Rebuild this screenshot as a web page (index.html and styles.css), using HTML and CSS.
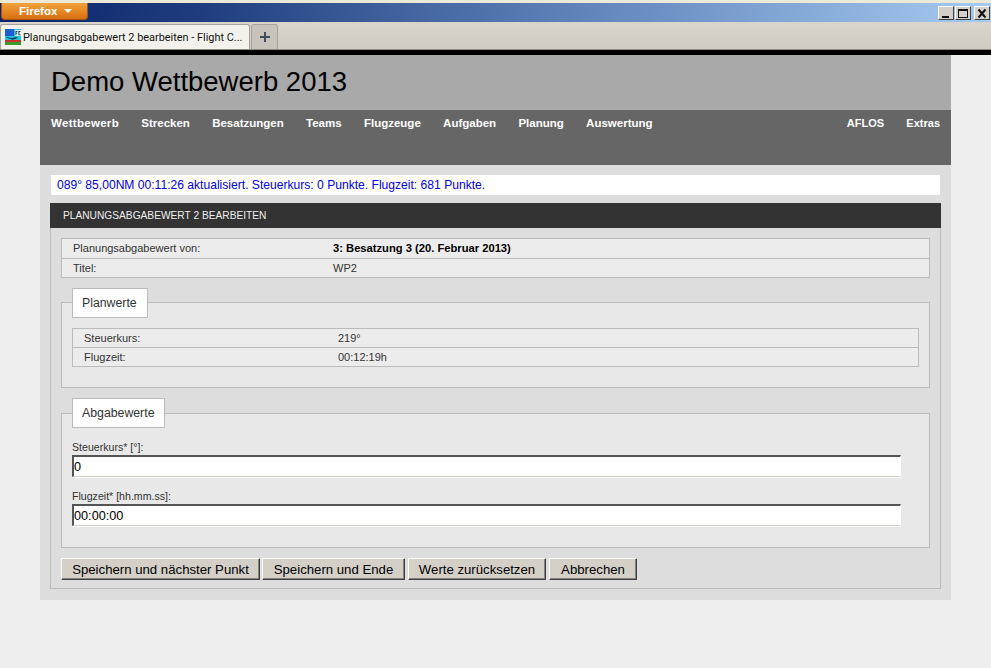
FILE: index.html
```html
<!DOCTYPE html>
<html lang="de">
<head>
    <meta charset="UTF-8">
    <meta name="viewport" content="width=device-width, initial-scale=1.0">
    <title>Planungsabgabewert 2 bearbeiten - Flight Contest</title>
    <link rel="stylesheet" href="styles.css">
</head>
<body>
    <div class="browser">
        <div class="titlebar">
            <div class="ff-button">Firefox <span class="ff-arrow"></span></div>
            <div class="win-buttons">
                <div class="win-btn">
                    <svg width="16" height="14" viewBox="0 0 16 14"><rect x="4" y="10" width="7" height="2" fill="#111"/></svg>
                </div>
                <div class="win-btn">
                    <svg width="16" height="14" viewBox="0 0 16 14"><rect x="3.500" y="3.500" width="9" height="8" fill="none" stroke="#111"/><rect x="3" y="3" width="10" height="2" fill="#111"/></svg>
                </div>
                <div class="win-btn win-close">
                    <svg width="16" height="14" viewBox="0 0 16 14"><path d="M4.500 3.500l7 8M11.500 3.500l-7 8" stroke="#111" stroke-width="2"/></svg>
                </div>
            </div>
        </div>
        <div class="tabstrip">
            <div class="tab">
                <svg class="favicon" width="16" height="16" viewBox="0 0 16 16">
                    <rect width="16" height="16" fill="#1cc6e0"/>
                    <rect y="0" width="9" height="7" fill="#1a5fd0"/>
                    <rect y="13" width="16" height="3" fill="#3a9a2a"/>
                    <rect y="11" width="16" height="2" fill="#c8342c"/>
                    <path d="M1 8l6 1 4-1 2 1-3 1-3 1-1-1-4-1z" fill="#123a60"/>
                    <rect x="10" y="1" width="6" height="6" fill="#d8f4f0"/>
                    <path d="M10.500 2h2v.8h-1.200v1h1v.8h-1v1.700h-.8zM15.500 2.800h-1.200v2.600h1.200v.8h-2v-4.200h2z" fill="#0a1a50"/>
                </svg>
                <span class="tab-title">Planungsabgabewert 2 bearbeiten - Flight C...</span>
            </div>
            <div class="newtab">
                <svg width="12" height="12" viewBox="0 0 12 12"><path d="M6 1v10M1 6h10" stroke="#3f4d5f" stroke-width="2"/></svg>
            </div>
        </div>
    </div>

    <div class="page">
        <div class="header">
            <h1>Demo Wettbewerb 2013</h1>
        </div>
        <div class="nav">
            <ul class="nav-left">
                <li>Wettbewerb</li>
                <li>Strecken</li>
                <li>Besatzungen</li>
                <li>Teams</li>
                <li>Flugzeuge</li>
                <li>Aufgaben</li>
                <li>Planung</li>
                <li>Auswertung</li>
            </ul>
            <ul class="nav-right">
                <li>AFLOS</li>
                <li>Extras</li>
            </ul>
        </div>
        <div class="content">
            <div class="message">089° 85,00NM 00:11:26 aktualisiert. Steuerkurs: 0 Punkte. Flugzeit: 681 Punkte.</div>

            <div class="box">
                <h2 class="box-title">PLANUNGSABGABEWERT 2 BEARBEITEN</h2>
                <div class="box-body">
                    <table class="info">
                        <tr>
                            <td class="info-label">Planungsabgabewert von:</td>
                            <td><strong>3: Besatzung 3 (20. Februar 2013)</strong></td>
                        </tr>
                        <tr>
                            <td class="info-label">Titel:</td>
                            <td>WP2</td>
                        </tr>
                    </table>

                    <div class="set set-plan">
                        <div class="legend">Planwerte</div>
                        <table class="info info-inner">
                            <tr>
                                <td class="info-label">Steuerkurs:</td>
                                <td>219°</td>
                            </tr>
                            <tr>
                                <td class="info-label">Flugzeit:</td>
                                <td>00:12:19h</td>
                            </tr>
                        </table>
                    </div>

                    <div class="set set-input">
                        <div class="legend">Abgabewerte</div>
                        <label class="field-label" for="kurs">Steuerkurs* [°]:</label>
                        <input class="field" type="text" id="kurs" value="0">
                        <label class="field-label" for="zeit">Flugzeit* [hh.mm.ss]:</label>
                        <input class="field" type="text" id="zeit" value="00:00:00">
                    </div>

                    <div class="buttons">
                        <button type="button" class="btn-next">Speichern und nächster Punkt</button>
                        <button type="button" class="btn-end">Speichern und Ende</button>
                        <button type="button" class="btn-reset">Werte zurücksetzen</button>
                        <button type="button" class="btn-last">Abbrechen</button>
                    </div>
                </div>
            </div>
        </div>
    </div>
</body>
</html>
```

FILE: styles.css
```css
body {
    font-family: "Liberation Sans", Arial, sans-serif;
    background-color: #eeeeee;
    margin: 0;
    padding: 0;
    color: #333;
}

/* browser window */
.browser {
    height: 55px;
    background-color: #000;
}

.titlebar {
    height: 22px;
    box-sizing: border-box;
    border-top: 3px solid #ece9d8;
    background: linear-gradient(to right, #0a246a 0%, #1f3d7e 20%, #5a7db5 55%, #a6caf0 100%);
    display: flex;
    justify-content: space-between;
}

.ff-button {
    width: 87px;
    height: 17px;
    margin-left: 1px;
    box-sizing: border-box;
    padding-left: 17px;
    background: linear-gradient(to bottom, #f0a33c, #d96f12);
    border: 1px solid #a8560f;
    border-top: none;
    border-radius: 0 0 4px 4px;
    color: #fff;
    font-size: 11.5px;
    font-weight: bold;
    line-height: 16px;
}

.ff-arrow {
    display: inline-block;
    margin-left: 3px;
    vertical-align: 2px;
    border-left: 4px solid transparent;
    border-right: 4px solid transparent;
    border-top: 4px solid #fff;
}

.win-buttons {
    display: flex;
    gap: 1px;
    padding: 3px 1px 0 0;
}

.win-btn {
    width: 16px;
    height: 14px;
    background-color: #d4d0c8;
    border: 1px solid;
    border-color: #fff #404040 #404040 #fff;
    box-sizing: border-box;
    overflow: hidden;
}

.win-btn svg {
    display: block;
    margin: -1px 0 0 -1px;
}

.win-close {
    margin-left: 2px;
}

.tabstrip {
    height: 28px;
    box-sizing: border-box;
    background: linear-gradient(to bottom, #d9d5cc, #cfcbc2);
    border-bottom: 1px solid #8f8d88;
    display: flex;
    align-items: flex-end;
}

.tab {
    width: 250px;
    height: 25px;
    box-sizing: border-box;
    background-color: #f3f1ec;
    border: 1px solid #a5a39d;
    border-bottom: none;
    border-radius: 3px 3px 0 0;
    display: flex;
    align-items: center;
    padding-left: 4px;
    gap: 2px;
    color: #111;
    font-family: Roboto, "Liberation Sans", sans-serif;
    font-size: 10.9px;
    white-space: nowrap;
}

.favicon {
    flex: none;
}

.newtab {
    width: 27px;
    height: 25px;
    box-sizing: border-box;
    margin-left: 1px;
    background-color: #c8c4bb;
    border: 1px solid #a5a39d;
    border-bottom: none;
    border-radius: 3px 3px 0 0;
    display: flex;
    align-items: center;
    justify-content: center;
}

/* page */
.page {
    width: 911px;
    margin: 0 0 0 40px;
}

.header {
    height: 55px;
    background-color: #a9a9a9;
}

h1 {
    margin: 0;
    padding: 10px 0 0 11px;
    font-size: 27.5px;
    line-height: 34px;
    font-weight: normal;
    color: #000;
}

.nav {
    height: 55px;
    background-color: #666;
    display: flex;
    justify-content: space-between;
    padding: 7px 11px 0;
    box-sizing: border-box;
}

.nav ul {
    list-style: none;
    margin: 0;
    padding: 0;
    display: flex;
    gap: 22.300px;
}

.nav li {
    color: #fff;
    font-size: 11.5px;
    font-weight: bold;
    line-height: 13px;
}

.nav-left li:first-child {
    letter-spacing: 0.3px;
}

.nav-right li {
    font-size: 11px;
}

.content {
    background-color: #dddddd;
    padding: 10px 10px 11px;
    height: 435px;
    box-sizing: border-box;
}

.message {
    background-color: #fff;
    color: #0000ee;
    font-size: 12.1px;
    line-height: 20px;
    height: 20px;
    padding-left: 6px;
    margin: 0 1px 8px;
}

.box {
    border: 1px solid #bbb;
    border-top: none;
    height: 386px;
    box-sizing: border-box;
}

.box-title {
    margin: 0 -1px;
    background-color: #333;
    color: #eee;
    font-size: 10.2px;
    font-weight: normal;
    line-height: 25px;
    height: 25px;
    padding-left: 13px;
}

.box-body {
    padding: 10px 10px 0;
}

.info {
    width: 100%;
    border-collapse: collapse;
    background-color: #ececec;
    font-size: 11px;
    color: #333;
}

.info td {
    border-top: 1px solid #bbb;
    border-bottom: 1px solid #bbb;
    height: 18.500px;
    padding: 0;
}

.info-inner td {
    height: 18px;
}

.info tr td:first-child {
    border-left: 1px solid #bbb;
    padding-left: 11px;
}

.info tr td:last-child {
    border-right: 1px solid #bbb;
}

.info strong {
    color: #000;
    font-size: 11.200px;
}

.info-label {
    width: 260px;
}

.info-inner .info-label {
    width: 254px;
}

.set {
    position: relative;
    background-color: #e8e8e8;
    border: 1px solid #bbb;
    margin-top: 24px;
    padding: 0 10px;
    box-sizing: border-box;
}

.set-plan {
    height: 86px;
    padding-top: 25px;
}

.set-input {
    height: 135px;
    margin-top: 25px;
    padding-top: 25px;
}

.legend {
    position: absolute;
    left: 10px;
    top: -15px;
    height: 30px;
    line-height: 28px;
    box-sizing: border-box;
    padding: 0 10px 0 9px;
    background-color: #fff;
    border: 1px solid #bbb;
    font-size: 12.3px;
    color: #333;
}

.set-input .legend {
    top: -16px;
}

.field-label {
    display: block;
    font-size: 10.6px;
    line-height: 12px;
    height: 16px;
    padding-top: 2px;
    box-sizing: border-box;
    color: #333;
}

.field {
    display: block;
    width: 829px;
    height: 22px;
    box-sizing: border-box;
    margin: 0 0 11px;
    padding: 0;
    font-family: "Liberation Sans", Arial, sans-serif;
    font-size: 12.7px;
    color: #000;
    background-color: #fff;
    border: 2px solid;
    border-color: #555 #fff #d4d0c8 #555;
    border-right-width: 1px;
    border-bottom-width: 1px;
    box-shadow: 0 1px 0 #fff;
    outline: none;
}

.buttons {
    display: flex;
    gap: 2px;
    margin-top: 10px;
}

button {
    flex: none;
    height: 22px;
    padding: 0;
    box-sizing: border-box;
    white-space: nowrap;
    font-family: "Liberation Sans", Arial, sans-serif;
    font-size: 13.2px;
    color: #000;
    background-color: #d4d0c8;
    border: 1px solid;
    border-color: #fff #404040 #404040 #fff;
    box-shadow: inset -1px -1px 0 #808080;
}

.btn-next {
    width: 199px;
}

.btn-end {
    width: 143px;
}

.btn-reset {
    width: 138px;
    margin-left: 1px;
}

.btn-last {
    width: 88px;
    margin-left: 1px;
}
```
